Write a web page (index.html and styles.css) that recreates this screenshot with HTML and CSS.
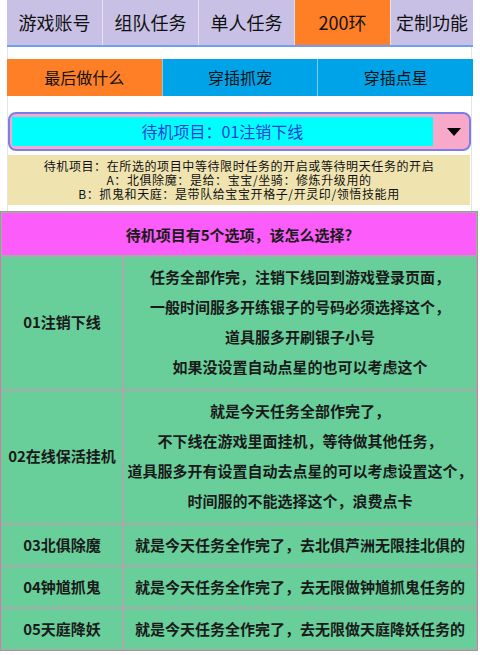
FILE: index.html
```html
<!DOCTYPE html>
<html lang="zh-CN">
<head>
    <meta charset="UTF-8">
    <title>200环 - 待机项目</title>
    <link rel="stylesheet" href="styles.css">
</head>
<body>
    <div class="top">
        <div class="tabs">
            <div class="tab">游戏账号</div>
            <div class="tab">组队任务</div>
            <div class="tab">单人任务</div>
            <div class="tab active">200环</div>
            <div class="tab">定制功能</div>
        </div>
        <div class="gap"></div>
        <div class="subtabs">
            <div class="subtab active">最后做什么</div>
            <div class="subtab">穿插抓宠</div>
            <div class="subtab">穿插点星</div>
        </div>

        <div class="setting">
            <div class="select-box">
                <div class="select-value">待机项目：01注销下线</div>
                <div class="select-arrow"></div>
            </div>
            <div class="info">
                <p>待机项目：在所选的项目中等待限时任务的开启或等待明天任务的开启</p>
                <p>A：北俱除魔：是给：宝宝/坐骑：修炼升级用的</p>
                <p>B：抓鬼和天庭：是带队给宝宝开格子/开灵印/领悟技能用</p>
            </div>
        </div>
    </div>

    <table class="options">
        <tr>
            <th colspan="2">待机项目有5个选项，该怎么选择?</th>
        </tr>
        <tr class="tall">
            <td class="name">01注销下线</td>
            <td class="desc">
                任务全部作完，注销下线回到游戏登录页面，<br>
                一般时间服多开练银子的号码必须选择这个，<br>
                道具服多开刷银子小号<br>
                如果没设置自动点星的也可以考虑这个
            </td>
        </tr>
        <tr class="tall">
            <td class="name">02在线保活挂机</td>
            <td class="desc">
                就是今天任务全部作完了，<br>
                不下线在游戏里面挂机，等待做其他任务，<br>
                道具服多开有设置自动去点星的可以考虑设置这个，<br>
                时间服的不能选择这个，浪费点卡
            </td>
        </tr>
        <tr>
            <td class="name">03北俱除魔</td>
            <td class="desc">就是今天任务全作完了，去北俱芦洲无限挂北俱的</td>
        </tr>
        <tr>
            <td class="name">04钟馗抓鬼</td>
            <td class="desc">就是今天任务全作完了，去无限做钟馗抓鬼任务的</td>
        </tr>
        <tr>
            <td class="name">05天庭降妖</td>
            <td class="desc">就是今天任务全作完了，去无限做天庭降妖任务的</td>
        </tr>
    </table>
</body>
</html>
```

FILE: styles.css
```css
body {
    margin: 0;
    font-family: "Noto Sans CJK SC", "Noto Sans", sans-serif;
    color: #111;
    background: #fff;
}
.top {
    margin: 0 7px;
}
.tabs {
    display: flex;
    height: 45px;
    background-color: #c8c1e5;
    border-bottom: 2px solid #6e9ff0;
}
.tab {
    width: 95px;
    border-right: 1px solid #e6e2f2;
    text-align: center;
    line-height: 45px;
    font-size: 18px;
}
.tab:last-child {
    flex: 1;
    border-right: none;
}
.tab.active {
    background-color: #ff7f27;
}
.gap {
    height: 12px;
    border-left: 1px solid #e4e4e4;
    border-right: 1px solid #e4e4e4;
    margin-right: 1px;
}
.subtabs {
    display: flex;
    height: 37px;
}
.subtab {
    flex: 1;
    text-align: center;
    line-height: 37px;
    font-size: 16px;
    background-color: #00a2e8;
    border-right: 1px solid #7fcdf0;
}
.subtab:last-child {
    border-right: none;
}
.subtab.active {
    background-color: #ff7f27;
}
.setting {
    padding: 16px 0 6px;
    border-left: 1px solid #e4e4e4;
    border-right: 1px solid #e4e4e4;
    margin-right: 1px;
}
.select-box {
    display: flex;
    align-items: center;
    height: 31px;
    padding: 2px;
    border: 2px solid #7b7de8;
    border-radius: 8px;
    background-color: #f8a8c8;
}
.select-value {
    width: 421px;
    height: 29px;
    line-height: 29px;
    background-color: #00ffff;
    color: #1f3fd8;
    font-size: 16px;
    text-align: center;
}
.select-arrow {
    width: 0;
    height: 0;
    margin-left: 14px;
    border-left: 7px solid transparent;
    border-right: 7px solid transparent;
    border-top: 8px solid #000;
}
.info {
    margin-top: 4px;
    margin-right: 1px;
    padding: 4px 0;
    background-color: #efe4b0;
    text-align: center;
    color: #111;
}
.info p {
    margin: 0;
    height: 14px;
    font-size: 12px;
    letter-spacing: 0.6px;
    line-height: 14px;
}
.options {
    width: 478px;
    border-collapse: separate;
    border-spacing: 0;
    border: 1px solid #9a9a9a;
    font-weight: bold;
    font-size: 15px;
    color: #1a1a1a;
}
.options th {
    height: 40px;
    background-color: #fc5cfa;
    border: 1px solid #a9a9a9;
    font-size: 15px;
}
.options td {
    background-color: #68cf9b;
    border: 1px solid #a9a9a9;
    text-align: center;
    line-height: 30px;
    padding: 5px 1px;
}
.options tr.tall td {
    padding: 1px 1px 3px;
    height: 128px;
}
.options td.name {
    width: 118px;
}
```
